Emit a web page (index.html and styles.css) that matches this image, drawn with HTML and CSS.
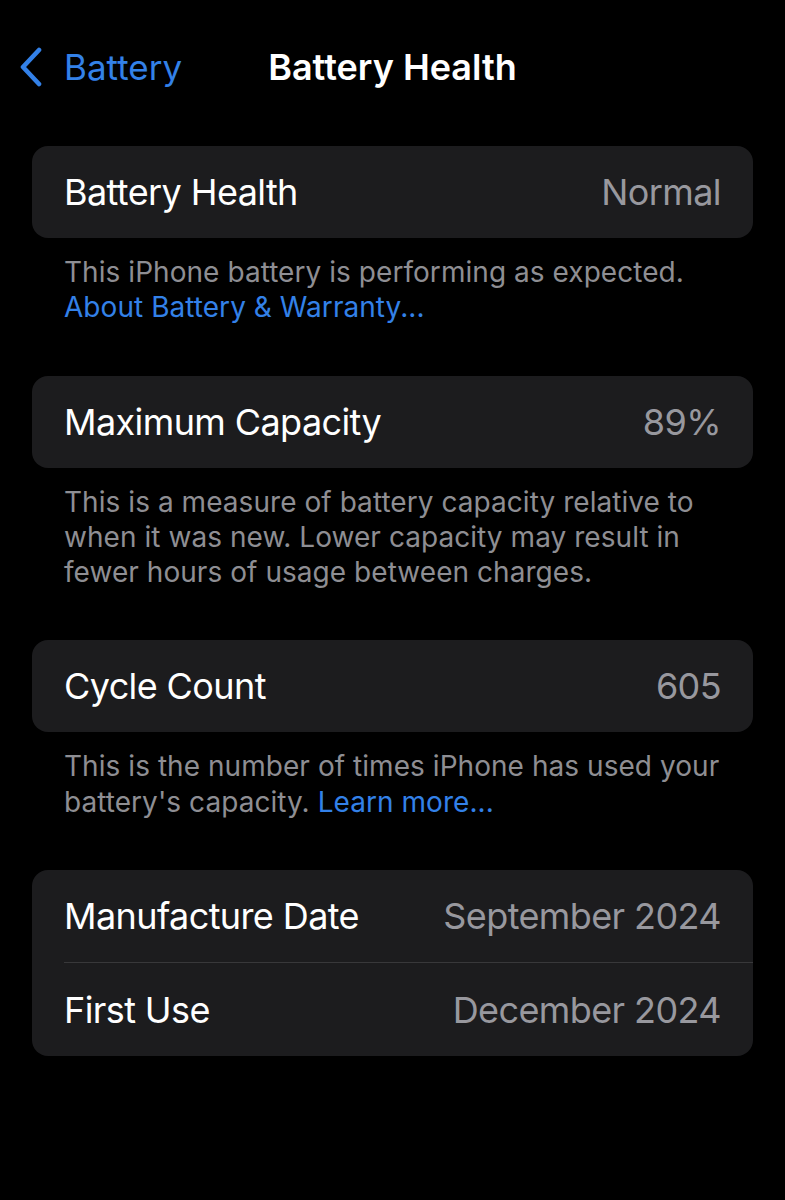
FILE: index.html
```html
<!DOCTYPE html>
<html lang="en">
<head>
<meta charset="utf-8">
<title>Battery Health</title>
<link rel="stylesheet" href="styles.css">
</head>
<body>
<div class="screen">
  <header class="nav">
    <a class="back">
      <svg class="chev" viewBox="0 0 26 40" width="26" height="40"><path d="M21 3 L5 20 L21 37" fill="none" stroke="currentColor" stroke-width="4.6" stroke-linecap="round" stroke-linejoin="round"/></svg>
      <span>Battery</span>
    </a>
    <h1 class="title">Battery Health</h1>
  </header>

  <section class="group">
    <div class="card">
      <div class="row"><span class="label">Battery Health</span><span class="value">Normal</span></div>
    </div>
    <p class="footer">This iPhone battery is performing as expected.<br><span class="link">About Battery &amp; Warranty...</span></p>
  </section>

  <section class="group">
    <div class="card">
      <div class="row"><span class="label">Maximum Capacity</span><span class="value">89%</span></div>
    </div>
    <p class="footer">This is a measure of battery capacity relative to when it was new. Lower capacity may result in fewer hours of usage between charges.</p>
  </section>

  <section class="group">
    <div class="card">
      <div class="row"><span class="label">Cycle Count</span><span class="value">605</span></div>
    </div>
    <p class="footer">This is the number of times iPhone has used your battery's capacity. <span class="link">Learn more...</span></p>
  </section>

  <section class="group">
    <div class="card">
      <div class="row"><span class="label">Manufacture Date</span><span class="value">September 2024</span></div>
      <div class="row sep"><span class="label">First Use</span><span class="value">December 2024</span></div>
    </div>
  </section>
</div>
</body>
</html>
```

FILE: styles.css
```css
html, body {
  margin: 0;
  padding: 0;
  background: #000;
}
body {
  font-family: Inter, "Noto Sans", "Liberation Sans", sans-serif;
  color: #fff;
  width: 785px;
  height: 1200px;
  overflow: hidden;
}
.screen {
  padding: 0 32px;
}
.nav {
  position: relative;
  height: 146px;
  display: flex;
  align-items: flex-start;
  justify-content: center;
}
.back {
  position: absolute;
  left: -14px;
  top: 47px;
  display: flex;
  align-items: center;
  color: #3381e8;
}
.chev {
  display: block;
}
.back span {
  font-size: 35px;
  margin-left: 20px;
  line-height: 40px;
}
.title {
  margin: 47px 0 0;
  font-size: 36px;
  line-height: 40px;
  font-weight: 600;
}
.group {
  margin-bottom: 50px;
}
.card {
  background: #1c1c1e;
  border-radius: 16px;
  overflow: hidden;
}
.row {
  height: 92px;
  margin-left: 32px;
  padding-right: 32px;
  display: flex;
  align-items: center;
  justify-content: space-between;
  font-size: 36px;
  letter-spacing: -0.6px;
}
.row.sep {
  border-top: 1px solid #38383a;
  height: 93px;
}
.value {
  color: #98989e;
}
.footer {
  margin: 0;
  padding: 17px 12px 0 32px;
  font-size: 28px;
  line-height: 35.3px;
  color: #8e8e93;
  letter-spacing: 0.05px;
}
.link {
  color: #3381e8;
}
```
